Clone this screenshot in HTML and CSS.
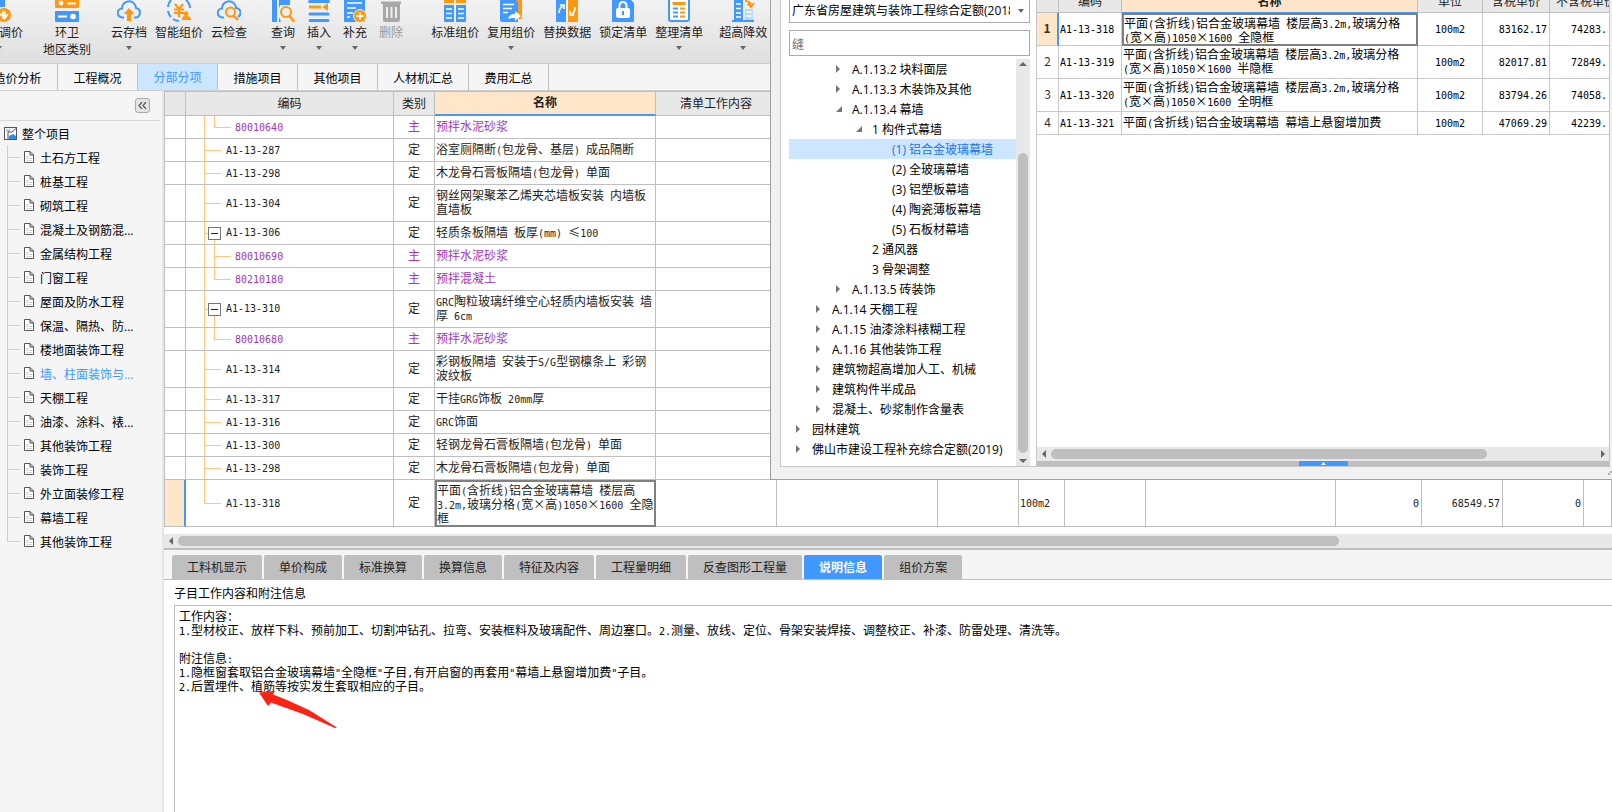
FILE: index.html
```html
<!DOCTYPE html>
<html lang="zh-CN">
<head>
<meta charset="utf-8">
<title>分部分项</title>
<link rel="stylesheet" href="styles.css">
</head>
<body>
<svg width="0" height="0" class="defs" aria-hidden="true">
  <symbol id="doc" viewBox="0 0 10 12"><path d="M.5 .5h5.500L9.500 4v7.500h-9z" fill="#fff" stroke="#555"/><path d="M6 .5V4h3.500" fill="none" stroke="#444"/><path d="M2 5.500h3M2 7.500h6M2 9.500h6" stroke="#ccc" stroke-width=".8"/></symbol>
  <symbol id="closed" viewBox="0 0 6 8"><path d="M0 0l4 4-4 4z" fill="#767676"/></symbol>
  <symbol id="open" viewBox="0 0 6 8"><path d="M6 1v6H0z" fill="#767676"/></symbol>
  <symbol id="down" viewBox="0 0 6 4"><path d="M0 0h6L3 4z" fill="#666"/></symbol>
</svg>
<div class="app">
  <header class="toolbar">
    <div class="group edge">
      <button class="tool"><svg class="ico" viewBox="0 0 24 22"><path d="M6 0h12v7H6z" fill="#4199ff"/><circle cx="17" cy="15" r="7" fill="#ff9712"/><path d="M13 16l3-4v7M21 14l-3 4v-7" fill="none" stroke="#fff" stroke-width="1.7"/></svg><span class="cut">调价</span><svg class="dd"><use href="#down"/></svg></button>
    </div>
    <div class="group">
      <button class="tool"><svg class="ico" viewBox="0 0 24 22"><path d="M0 0h24v6.5q0 1.500-1.500 1.500h-21Q0 8 0 6.500z" fill="#ff9712"/><path d="M12 3.500h9" stroke="#fff" stroke-width="2"/><circle cx="6" cy="3" r="2.400" fill="#fff"/><rect y="11" width="24" height="11" rx="1" fill="#4199ff"/><path d="M3 16.500h9" stroke="#fff" stroke-width="2"/><circle cx="18" cy="16.500" r="2.800" fill="#fff"/></svg><span>环卫</span><span>地区类别</span></button>
    </div>
    <div class="group">
      <button class="tool"><svg class="ico" viewBox="0 0 24 22"><path d="M7 17.500H5.500a4.500 4.500 0 0 1-.5-9A7 7 0 0 1 19 8a4.800 4.800 0 0 1-.5 9.500H17" fill="none" stroke="#4199ff" stroke-width="2"/><path d="M12 8l5.500 6H14v7h-4v-7H6.500z" fill="#ff9712"/></svg><span>云存档</span><svg class="dd"><use href="#down"/></svg></button>
      <button class="tool"><svg class="ico" viewBox="0 0 24 22"><path d="M4 0a11 11 0 0 0-3 7M1 11a11 11 0 0 0 3 6M6 19a11 11 0 0 0 6 2M19 0a11 11 0 0 1 4 8" fill="none" stroke="#4199ff" stroke-width="2"/><path d="M8 4l4 5 4-5M12 9v8M7 9.500h10M7 13h10" fill="none" stroke="#ff9712" stroke-width="2.200"/><path d="M15 20q0-4 3-4a2.500 2.500 0 1 1 2 0q4 0 4 4z" fill="#ff9712"/></svg><span>智能组价</span></button>
      <button class="tool"><svg class="ico" viewBox="0 0 24 22"><path d="M7 17.500H5.500a4.500 4.500 0 0 1-.5-9A7 7 0 0 1 19 8a4.800 4.800 0 0 1 2 9" fill="none" stroke="#4199ff" stroke-width="2"/><circle cx="13.500" cy="12" r="4.500" fill="#eee" stroke="#ff9712" stroke-width="2"/><path d="M16.500 15.500L21 20" stroke="#ff9712" stroke-width="2.400"/></svg><span>云检查</span></button>
    </div>
    <div class="group wide">
      <button class="tool"><svg class="ico" viewBox="0 0 24 22"><path d="M1 0h5v22H1zM8 0h11v5H9.500L8 8zM8 17l2 5H8z" fill="#4199ff"/><circle cx="15" cy="12" r="5" fill="none" stroke="#ff9712" stroke-width="2"/><path d="M18.500 16l4.500 5.500" stroke="#ff9712" stroke-width="2.400"/></svg><span>查询</span><svg class="dd"><use href="#down"/></svg></button>
      <button class="tool"><svg class="ico" viewBox="0 0 24 22"><path d="M2.500 1.500h19M3 14h18M3 20.500h18" stroke="#4199ff" stroke-width="3" stroke-linecap="round"/><path d="M2 5.500h12v3H2zM15 7l6-4v8z" fill="#ff9712"/></svg><span>插入</span><svg class="dd"><use href="#down"/></svg></button>
      <button class="tool"><svg class="ico" viewBox="0 0 24 22"><path d="M1 0h21v22H2q-1 0-1-1z" fill="#4199ff"/><path d="M4 3h15M4 8h9M4 13h6M4 17h3" stroke="#fff" stroke-width="1.500"/><circle cx="17" cy="16" r="6.500" fill="#ff9712" stroke="#eee"/><path d="M17 12.500v7M13.500 16h7" stroke="#fff" stroke-width="1.800"/></svg><span>补充</span><svg class="dd"><use href="#down"/></svg></button>
      <button class="tool" disabled><svg class="ico" viewBox="0 0 24 22"><path d="M2 1.500h20V4H2zM4 4h17v16q0 2-2 2H6q-2 0-2-2z" fill="#a8a8a8"/><path d="M8 7v11M12.500 7v11M17 7v11" stroke="#eee" stroke-width="2"/></svg><span>删除</span></button>
    </div>
    <div class="group last">
      <button class="tool"><svg class="ico" viewBox="0 0 24 22"><path d="M1 0h10v3H1zM13 0h10v3H13z" fill="#ff9712"/><path d="M1 5h10v17H2q-1 0-1-1zM13 5h10v16q0 1-1 1h-9z" fill="#4199ff"/><path d="M3 9h6M3 13.500h6M3 18h6M15 9h6M15 13.500h6M15 18h6" stroke="#fff" stroke-width="1.400"/></svg><span>标准组价</span></button>
      <button class="tool"><svg class="ico" viewBox="0 0 24 22"><path d="M16 0h7v17q0 2-2 2h-5z" fill="#ff9712"/><path d="M1 0h16l2 3v19H3q-2 0-2-2z" fill="#4199ff"/><path d="M4 4.500h11M4 8.500h9M4 12.500h5" stroke="#fff" stroke-width="1.600"/><path d="M9 19q1-5 7-5v-3l6 5-6 5v-3q-4-.5-7 1z" fill="#fff"/></svg><span>复用组价</span><svg class="dd"><use href="#down"/></svg></button>
      <button class="tool"><svg class="ico" viewBox="0 0 24 22"><path d="M1 0h10v22H2q-1 0-1-1z" fill="#4199ff"/><path d="M13 0h10v21q0 1-1 1h-9z" fill="#ff9712"/><path d="M4 13q0-5 4-7M5 5h4v4M20 7q0 5-3 7M15 11v4h4" fill="none" stroke="#fff" stroke-width="1.700"/></svg><span>替换数据</span></button>
      <button class="tool"><svg class="ico" viewBox="0 0 24 22"><path d="M1 0h19l3 3v18q0 1-1 1H2q-1 0-1-1z" fill="#4199ff"/><path d="M8.500 8V5.500a3.500 3.500 0 0 1 7 0V8" fill="none" stroke="#fff" stroke-width="2"/><rect x="5" y="8" width="14" height="10" rx="2" fill="#fff"/><path d="M12 11v4" stroke="#4199ff" stroke-width="2"/></svg><span>锁定清单</span></button>
      <button class="tool"><svg class="ico" viewBox="0 0 24 22"><path d="M2 0v19q0 2 2 2h16q2 0 2-2V0" fill="#fff" stroke="#4199ff" stroke-width="2"/><path d="M5.500 3.500h13" stroke="#ff9712" stroke-width="3"/><path d="M6 8.500h5M6 12.500h5M6 16.500h5" stroke="#4199ff" stroke-width="2"/><path d="M13 8.500h5M13 12.500h5M13 16.500h5" stroke="#ff9712" stroke-width="2"/></svg><span>整理清单</span><svg class="dd"><use href="#down"/></svg></button>
    </div>
    <div class="group">
      <button class="tool"><svg class="ico" viewBox="0 0 24 22"><path d="M3 0h9v21H3z" fill="#4199ff"/><path d="M14 9h8v12h-8z" fill="#b9d9fb"/><path d="M1 21h22" stroke="#4199ff" stroke-width="2"/><path d="M5 4h5M5 8.500h5M5 13h5M5 17h5M15.500 12h5M15.500 16h5" stroke="#fff" stroke-width="1.500"/><path d="M14 1q6 0 6 5M16.500 3.500L20 7l3-4" fill="none" stroke="#ff9712" stroke-width="2"/></svg><span>超高降效</span><svg class="dd"><use href="#down"/></svg></button>
    </div>
  </header>

  <nav class="tabs">
    <button class="tab first">造价分析</button><button class="tab">工程概况</button><button class="tab on">分部分项</button><button class="tab">措施项目</button><button class="tab">其他项目</button><button class="tab">人材机汇总</button><button class="tab">费用汇总</button>
  </nav>

  <div class="work">
    <aside class="side">
      <div class="sidehead"><button class="fold" aria-label="折叠"><svg viewBox="0 0 9 7"><path d="M4 0L1 3.500 4 7M8 0L5 3.500 8 7" fill="none" stroke="#555" stroke-width="1.200"/></svg></button></div>
      <div class="root"><svg class="rooticon" viewBox="0 0 13 13"><rect x=".5" y=".5" width="12" height="12" fill="#fff" stroke="#555"/><path d="M2 2.500h4v2H2z" fill="#8cc0fb"/><path d="M12.500 1L8 5H4v7" fill="none" stroke="#555"/><path d="M5 12V9l4-2 3 2v3z" fill="#2f8bf5"/></svg>整个项目</div>
      <ul class="parts">
        <li><svg><use href="#doc"/></svg>土石方工程</li>
        <li><svg><use href="#doc"/></svg>桩基工程</li>
        <li><svg><use href="#doc"/></svg>砌筑工程</li>
        <li><svg><use href="#doc"/></svg>混凝土及钢筋混...</li>
        <li><svg><use href="#doc"/></svg>金属结构工程</li>
        <li><svg><use href="#doc"/></svg>门窗工程</li>
        <li><svg><use href="#doc"/></svg>屋面及防水工程</li>
        <li><svg><use href="#doc"/></svg>保温、隔热、防...</li>
        <li><svg><use href="#doc"/></svg>楼地面装饰工程</li>
        <li class="cur"><svg><use href="#doc"/></svg>墙、柱面装饰与...</li>
        <li><svg><use href="#doc"/></svg>天棚工程</li>
        <li><svg><use href="#doc"/></svg>油漆、涂料、裱...</li>
        <li><svg><use href="#doc"/></svg>其他装饰工程</li>
        <li><svg><use href="#doc"/></svg>装饰工程</li>
        <li><svg><use href="#doc"/></svg>外立面装修工程</li>
        <li><svg><use href="#doc"/></svg>幕墙工程</li>
        <li><svg><use href="#doc"/></svg>其他装饰工程</li>
      </ul>
    </aside>

    <main class="main">
      <table class="grid items">
        <colgroup><col class="w22"><col class="w208"><col class="w41"><col class="w221"><col class="w121"><col class="w161"><col class="w81"><col class="w46"><col class="w81"><col class="w190"><col class="w86"><col class="w81"><col class="w81"><col></colgroup>
        <thead><tr><th></th><th>编码</th><th>类别</th><th class="hot">名称</th><th>清单工作内容</th><th></th><th></th><th></th><th></th><th></th><th></th><th></th><th></th><th></th></tr></thead>
        <tbody>
          <tr class="mat"><td></td><td class="sub end"><i>80010640</i></td><td class="kind">主</td><td>预拌水泥砂浆</td><td></td><td></td><td></td><td></td><td></td><td></td><td></td><td></td><td></td><td></td></tr>
          <tr><td></td><td class="code"><i>A1-13-287</i></td><td class="kind">定</td><td>浴室厕隔断<i>(</i>包龙骨、基层<i>) </i>成品隔断</td><td></td><td></td><td></td><td></td><td></td><td></td><td></td><td></td><td></td><td></td></tr>
          <tr><td></td><td class="code"><i>A1-13-298</i></td><td class="kind">定</td><td>木龙骨石膏板隔墙<i>(</i>包龙骨<i>) </i>单面</td><td></td><td></td><td></td><td></td><td></td><td></td><td></td><td></td><td></td><td></td></tr>
          <tr class="two"><td></td><td class="code"><i>A1-13-304</i></td><td class="kind">定</td><td>钢丝网架聚苯乙烯夹芯墙板安装<i> </i>内墙板<br>直墙板</td><td></td><td></td><td></td><td></td><td></td><td></td><td></td><td></td><td></td><td></td></tr>
          <tr><td></td><td class="parent"><button class="minus" aria-label="收起"></button><i>A1-13-306</i></td><td class="kind">定</td><td>轻质条板隔墙<i> </i>板厚<i>(mm) </i>≤<i>100</i></td><td></td><td></td><td></td><td></td><td></td><td></td><td></td><td></td><td></td><td></td></tr>
          <tr class="mat"><td></td><td class="sub"><i>80010690</i></td><td class="kind">主</td><td>预拌水泥砂浆</td><td></td><td></td><td></td><td></td><td></td><td></td><td></td><td></td><td></td><td></td></tr>
          <tr class="mat"><td></td><td class="sub end"><i>80210180</i></td><td class="kind">主</td><td>预拌混凝土</td><td></td><td></td><td></td><td></td><td></td><td></td><td></td><td></td><td></td><td></td></tr>
          <tr class="two"><td></td><td class="parent"><button class="minus" aria-label="收起"></button><i>A1-13-310</i></td><td class="kind">定</td><td><i>GRC</i>陶粒玻璃纤维空心轻质内墙板安装<i> </i>墙<br>厚<i> 6cm</i></td><td></td><td></td><td></td><td></td><td></td><td></td><td></td><td></td><td></td><td></td></tr>
          <tr class="mat"><td></td><td class="sub end"><i>80010680</i></td><td class="kind">主</td><td>预拌水泥砂浆</td><td></td><td></td><td></td><td></td><td></td><td></td><td></td><td></td><td></td><td></td></tr>
          <tr class="two"><td></td><td class="code"><i>A1-13-314</i></td><td class="kind">定</td><td>彩钢板隔墙<i> </i>安装于<i>S/G</i>型钢檩条上<i> </i>彩钢<br>波纹板</td><td></td><td></td><td></td><td></td><td></td><td></td><td></td><td></td><td></td><td></td></tr>
          <tr><td></td><td class="code"><i>A1-13-317</i></td><td class="kind">定</td><td>干挂<i>GRG</i>饰板<i> 20mm</i>厚</td><td></td><td></td><td></td><td></td><td></td><td></td><td></td><td></td><td></td><td></td></tr>
          <tr><td></td><td class="code"><i>A1-13-316</i></td><td class="kind">定</td><td><i>GRC</i>饰面</td><td></td><td></td><td></td><td></td><td></td><td></td><td></td><td></td><td></td><td></td></tr>
          <tr><td></td><td class="code"><i>A1-13-300</i></td><td class="kind">定</td><td>轻钢龙骨石膏板隔墙<i>(</i>包龙骨<i>) </i>单面</td><td></td><td></td><td></td><td></td><td></td><td></td><td></td><td></td><td></td><td></td></tr>
          <tr><td></td><td class="code"><i>A1-13-298</i></td><td class="kind">定</td><td>木龙骨石膏板隔墙<i>(</i>包龙骨<i>) </i>单面</td><td></td><td></td><td></td><td></td><td></td><td></td><td></td><td></td><td></td><td></td></tr>
          <tr class="three"><td class="mark"></td><td class="code end"><i>A1-13-318</i></td><td class="kind">定</td><td class="focus">平面<i>(</i>含折线<i>)</i>铝合金玻璃幕墙<i> </i>楼层高<br><i>3.2m,</i>玻璃分格<i>(</i>宽×高<i>)1050</i>×<i>1600 </i>全隐<br>框</td><td></td><td></td><td></td><td><i>100m2</i></td><td></td><td></td><td class="num"><i>0</i></td><td class="num"><i>68549.57</i></td><td class="num"><i>0</i></td><td></td></tr>
        </tbody>
      </table>
      <div class="hscroll main-scroll"><svg class="arr" viewBox="0 0 4 8"><path d="M4 0v8L0 4z"/></svg><span class="thumb"></span></div>

      <nav class="dock">
        <button>工料机显示</button><button>单价构成</button><button>标准换算</button><button>换算信息</button><button>特征及内容</button><button>工程量明细</button><button>反查图形工程量</button><button class="on">说明信息</button><button>组价方案</button>
      </nav>
      <section class="info">
        <h2>子目工作内容和附注信息</h2>
        <div class="note">
          <p>工作内容：</p>
          <p><i>1.</i>型材校正、放样下料、预前加工、切割冲钻孔、拉弯、安装框料及玻璃配件、周边塞口。<i>2.</i>测量、放线、定位、骨架安装焊接、调整校正、补漆、防雷处理、清洗等。</p>
          <p><br></p>
          <p>附注信息<i>:</i></p>
          <p><i>1.</i>隐框窗套取铝合金玻璃幕墙<i>"</i>全隐框<i>"</i>子目<i>,</i>有开启窗的再套用<i>"</i>幕墙上悬窗增加费<i>"</i>子目。</p>
          <p><i>2.</i>后置埋件、植筋等按实发生套取相应的子目。</p>
          <svg class="pointer" viewBox="0 0 80 38"><path d="M1 1.500L17 0l-2 3.500L29 9l22 10 28 17.500L77 37 45 23 13 11.500 10 15z" fill="#fb2314"/></svg>
        </div>
      </section>
    </main>
  </div>

  <section class="dialog">
    <div class="inner">
      <div class="finder">
        <div class="combo"><select aria-label="定额库"><option>广东省房屋建筑与装饰工程综合定额(2018)</option></select><svg class="dd"><use href="#down"/></svg></div>
        <input class="search" type="text" value="缝" aria-label="搜索">
        <div class="treebox">
          <ul class="tree">
            <li class="l2"><svg><use href="#closed"/></svg>A.1.13.2 块料面层</li>
            <li class="l2"><svg><use href="#closed"/></svg>A.1.13.3 木装饰及其他</li>
            <li class="l2"><svg><use href="#open"/></svg>A.1.13.4 幕墙</li>
            <li class="l3"><svg><use href="#open"/></svg>1 构件式幕墙</li>
            <li class="l4 sel"><svg></svg>(1) 铝合金玻璃幕墙</li>
            <li class="l4"><svg></svg>(2) 全玻璃幕墙</li>
            <li class="l4"><svg></svg>(3) 铝塑板幕墙</li>
            <li class="l4"><svg></svg>(4) 陶瓷薄板幕墙</li>
            <li class="l4"><svg></svg>(5) 石板材幕墙</li>
            <li class="l3"><svg></svg>2 通风器</li>
            <li class="l3"><svg></svg>3 骨架调整</li>
            <li class="l2"><svg><use href="#closed"/></svg>A.1.13.5 砖装饰</li>
            <li class="l1"><svg><use href="#closed"/></svg>A.1.14 天棚工程</li>
            <li class="l1"><svg><use href="#closed"/></svg>A.1.15 油漆涂料裱糊工程</li>
            <li class="l1"><svg><use href="#closed"/></svg>A.1.16 其他装饰工程</li>
            <li class="l1"><svg><use href="#closed"/></svg>建筑物超高增加人工、机械</li>
            <li class="l1"><svg><use href="#closed"/></svg>建筑构件半成品</li>
            <li class="l1"><svg><use href="#closed"/></svg>混凝土、砂浆制作含量表</li>
            <li class="l0"><svg><use href="#closed"/></svg>园林建筑</li>
            <li class="l0"><svg><use href="#closed"/></svg>佛山市建设工程补充综合定额(2019)</li>
          </ul>
          <div class="vscroll"><svg class="arr" viewBox="0 0 8 4"><path d="M4 0l4 4H0z"/></svg><span class="thumb"></span><svg class="arr" viewBox="0 0 8 4"><path d="M0 0h8L4 4z"/></svg></div>
        </div>
      </div>
      <div class="result">
        <table class="grid quota">
          <colgroup><col class="w22"><col class="w63"><col class="w296"><col class="w65"><col class="w67"><col></colgroup>
          <thead><tr><th></th><th>编码</th><th class="hot">名称</th><th>单位</th><th>含税单价</th><th class="clip">不含税单价</th></tr></thead>
          <tbody>
            <tr><td class="no mark"><b>1</b></td><td><i>A1-13-318</i></td><td class="focus">平面<i>(</i>含折线<i>)</i>铝合金玻璃幕墙<i> </i>楼层高<i>3.2m,</i>玻璃分格<br><i>(</i>宽×高<i>)1050</i>×<i>1600 </i>全隐框</td><td class="mid"><i>100m2</i></td><td class="num"><i>83162.17</i></td><td class="num"><i>74283.</i></td></tr>
            <tr><td class="no">2</td><td><i>A1-13-319</i></td><td>平面<i>(</i>含折线<i>)</i>铝合金玻璃幕墙<i> </i>楼层高<i>3.2m,</i>玻璃分格<br><i>(</i>宽×高<i>)1050</i>×<i>1600 </i>半隐框</td><td class="mid"><i>100m2</i></td><td class="num"><i>82017.81</i></td><td class="num"><i>72849.</i></td></tr>
            <tr><td class="no">3</td><td><i>A1-13-320</i></td><td>平面<i>(</i>含折线<i>)</i>铝合金玻璃幕墙<i> </i>楼层高<i>3.2m,</i>玻璃分格<br><i>(</i>宽×高<i>)1050</i>×<i>1600 </i>全明框</td><td class="mid"><i>100m2</i></td><td class="num"><i>83794.26</i></td><td class="num"><i>74058.</i></td></tr>
            <tr class="one"><td class="no">4</td><td><i>A1-13-321</i></td><td>平面<i>(</i>含折线<i>)</i>铝合金玻璃幕墙<i> </i>幕墙上悬窗增加费</td><td class="mid"><i>100m2</i></td><td class="num"><i>47069.29</i></td><td class="num"><i>42239.</i></td></tr>
          </tbody>
        </table>
        <div class="foot">
          <div class="hscroll"><svg class="arr" viewBox="0 0 4 8"><path d="M4 0v8L0 4z"/></svg><span class="track"><span class="thumb"></span></span><svg class="arr" viewBox="0 0 4 8"><path d="M0 0v8l4-4z"/></svg></div>
          <div class="splitter"><button aria-label="展开"><svg viewBox="0 0 5 3"><path d="M2.500 0L5 3H0z" fill="#fff"/></svg></button></div>
        </div>
      </div>
    </div>
    <svg class="grip" viewBox="0 0 4 4"><path d="M2 0h2v2H2zM0 2h2v2H0z" fill="#aaa"/></svg>
  </section>
</div>
</body>
</html>
```
FILE: styles.css
```css
* { box-sizing: border-box; }
body {
  margin: 0;
  overflow: hidden;
  background: #fff;
  color: #000;
  font: 12px/14px "Open Sans", "Noto Sans CJK SC", sans-serif;
}
button, input, select { font: inherit; color: inherit; margin: 0; padding: 0; border: 0; border-radius: 0; background: none; }
ul, p, h2 { margin: 0; padding: 0; list-style: none; font-weight: normal; font-size: 12px; }
svg { display: block; flex: none; }
i { font: 10px/0 "DejaVu Sans Mono", monospace; white-space: pre; }
.defs { position: absolute; }
.app { position: relative; display: flex; flex-direction: column; min-height: 100vh; }

.toolbar {
  display: flex;
  gap: 20px;
  height: 64px;
  background: linear-gradient(#f2f2f2, #dfdfdf);
  border-bottom: 1px solid #cdcdcd;
  color: #222;
}
.group { display: flex; gap: 8px; align-items: flex-start; }
.group.wide { gap: 12px; margin: 0 8px 0 4px; }
.group.last { margin-right: -4px; }
.edge { margin-left: -25px; }
.edge .tool { width: 48px; }
.tool { display: flex; flex-direction: column; align-items: center; line-height: 17px; white-space: nowrap; }
.tool[disabled] { color: #999; }
.ico { width: 24px; height: 22px; margin-bottom: 2px; }
.cut { align-self: flex-end; }
.dd { width: 6px; height: 4px; }
.tool .dd { margin-top: 5px; }

.tabs { display: flex; height: 27px; background: #f5f5f5; border-bottom: 1px solid #cfcfcf; }
.tab { min-width: 80px; padding: 3px 15px 0; border-right: 1px solid #bfbfbf; white-space: nowrap; }
.tab.first { margin-left: -22px; }
.tab.on { padding-top: 1px; background: #cce6ff; color: #4199ff; }

.work { display: flex; flex: 1; }
.side { flex: none; width: 164px; background: #f5f5f5; border-right: 2px solid #e6e6e6; }
.sidehead { display: flex; justify-content: flex-end; height: 30px; margin-right: 2px; padding: 7px 10px 0 0; border-bottom: 1px solid #d8d8d8; }
.fold { display: flex; align-items: center; justify-content: center; width: 15px; height: 15px; border: 1px solid #aaa; border-radius: 3px; background: #e4e4e4; }
.fold svg { width: 9px; height: 7px; }
.root { display: flex; align-items: center; gap: 5px; height: 24px; padding: 3px 0 0 4px; }
.rooticon { width: 13px; height: 13px; margin-bottom: 2px; }
.parts li {
  display: flex;
  align-items: center;
  gap: 6px;
  height: 24px;
  padding: 3px 0 0 24px;
  white-space: nowrap;
  background:
    linear-gradient(#ffc77d, #ffc77d) 7px 0 / 1px 100% no-repeat,
    linear-gradient(#ffc77d, #ffc77d) 7px 12px / 13px 1px no-repeat;
}
.parts li:last-child { background-size: 1px 12px, 13px 1px; }
.parts svg { width: 10px; height: 12px; margin-bottom: 3px; }
.parts .cur { color: #4199ff; }

.main { flex: 1; min-width: 0; display: flex; flex-direction: column; font-family: "Noto Sans CJK SC", sans-serif; }
.grid { width: 100%; table-layout: fixed; border-collapse: separate; border-spacing: 0; }
.grid th, .grid td { padding: 0 1px 2px; border: 0 solid #bfbfbf; border-width: 0 1px 1px 0; overflow: hidden; white-space: nowrap; }
.grid th { background: #e8e8e8; font-weight: normal; color: #222; text-align: center; }
.grid th.hot { background: #ffe6c8; border-bottom: 2px solid #4199ff; font-weight: bold; }
.grid td.mark { background: #ffe6c8; border-right: 2px solid #4199ff; }
.grid td.focus { border: 2px solid #808080; padding: 0; }
.grid td.num { text-align: right; padding-right: 2px; }
.grid td.mid { text-align: center; }
.w22 { width: 22px; } .w41 { width: 41px; } .w46 { width: 46px; } .w63 { width: 63px; }
.w65 { width: 65px; } .w67 { width: 67px; } .w81 { width: 81px; } .w86 { width: 86px; }
.w121 { width: 121px; } .w161 { width: 161px; } .w190 { width: 190px; }
.w208 { width: 208px; } .w221 { width: 221px; } .w296 { width: 296px; }

.items { color: #222; }
.items th { height: 25px; border-top-width: 1px; }
.items td { height: 23px; }
.items .two td { height: 37px; }
.items .three td { height: 47px; }
.items th:first-child, .items td:first-child { border-left-width: 1px; }
.items .kind { text-align: center; }
.items .mat { color: #a336b5; }
.items .code, .items .sub, .items .parent {
  padding-left: 40px;
  background-image: linear-gradient(#ffc77d, #ffc77d), linear-gradient(#ffc77d, #ffc77d), linear-gradient(#ffc77d, #ffc77d);
  background-repeat: no-repeat;
  background-position: 18px 0, 18px 50%, 28px 0;
  background-size: 1px 100%, 17px 1px, 0 0;
}
.items .code.end { background-size: 1px 50%, 17px 1px, 0 0; }
.items .sub { padding-left: 49px; background-position: 18px 0, 28px 50%, 28px 0; background-size: 1px 100%, 17px 1px, 1px 100%; }
.items .sub.end { background-size: 1px 100%, 17px 1px, 1px 50%; }
.items .parent { padding-left: 22px; background-position: 18px 0, 18px 50%, 28px 100%; background-size: 1px 100%, 4px 1px, 1px 50%; }
.minus { width: 13px; height: 13px; margin-right: 5px; vertical-align: middle; border: 1px solid #777; background: linear-gradient(#222, #222) center / 7px 1px no-repeat #fff; }

.hscroll { display: flex; align-items: center; height: 14px; background: #e8e8e8; }
.arr { fill: #666670; }
.hscroll .arr { width: 4px; height: 8px; }
.thumb { background: #bfbfbf; border-radius: 5px; }
.hscroll .thumb { height: 10px; }
.main-scroll { margin-top: 7px; padding: 0 5px; gap: 5px; }
.main-scroll .thumb { flex: 1; margin-right: 268px; }

.dock { display: flex; gap: 2px; height: 32px; padding: 5px 0 0 8px; background: #f5f5f5; border-top: 2px solid #bfbfbf; border-bottom: 1px solid #bfbfbf; }
.dock button { padding: 0 15px; background: #bfbfbf; border-radius: 2px 2px 0 0; color: #222; white-space: nowrap; }
.dock .on { background: #4199ff; color: #fff; font-weight: bold; }
.info { flex: 1; display: flex; flex-direction: column; padding: 6px 0 0 10px; }
.info h2 { line-height: 14px; margin-bottom: 5px; }
.note { position: relative; flex: 1; min-height: 207px; padding: 3px 4px; border: 1px solid #bfbfbf; border-width: 1px 0 0 1px; white-space: nowrap; }
.note p { height: 14px; }
.pointer { position: absolute; left: 83px; top: 85px; width: 80px; height: 38px; }

.dialog { position: absolute; left: 770px; right: 0; top: 0; padding: 0 2px 12px 9px; background: #f1f1f1; border-left: 1px solid #a0a0a0; border-bottom: 1px solid #a0a0a0; }
.inner { display: flex; background: #fff; border: 1px solid #c6c6c6; border-top: 0; }
.finder { flex: none; width: 255px; padding: 0 6px 0 8px; }
.combo { display: flex; align-items: center; height: 24px; margin-top: -1px; padding-right: 5px; border: 1px solid #aaa; }
.combo select { flex: 1; min-width: 0; padding-left: 2px; appearance: none; overflow: hidden; margin-right: 8px; }
.search { display: block; width: 100%; height: 26px; margin: 7px 0 3px; padding: 1px 0 0 2px; border: 1px solid #aaa; color: #777; }
.treebox { display: flex; }
.tree { flex: 1; min-width: 0; padding-bottom: 7px; }
.tree li { display: flex; align-items: center; gap: 10px; height: 20px; padding-top: 2px; white-space: nowrap; }
.tree svg { width: 6px; height: 8px; margin-bottom: 2px; }
.tree .l0 { padding-left: 7px; }
.tree .l1 { padding-left: 27px; }
.tree .l2 { padding-left: 47px; }
.tree .l3 { padding-left: 67px; }
.tree .l4 { padding-left: 87px; }
.tree .sel { background: #cce6ff; color: #1c74e8; }
.vscroll { display: flex; flex-direction: column; align-items: center; justify-content: space-between; width: 14px; padding: 3px 0; background: #e8e8e8; }
.vscroll .arr { width: 8px; height: 4px; }
.vscroll .thumb { width: 10px; height: 300px; margin-top: 80px; }

.result { flex: 1; min-width: 0; display: flex; flex-direction: column; justify-content: space-between; border-left: 1px solid #c6c6c6; font-family: "Noto Sans CJK SC", sans-serif; }
.quota { margin-top: -11px; }
.quota th { height: 24px; padding-bottom: 0; }
.quota th.hot { border-bottom-width: 1px; }
.quota th.clip { text-align: left; padding-left: 6px; }
.quota td { height: 33px; border-color: #c8c8c8; }
.quota .one td { height: 23px; }
.quota td.no { text-align: center; color: #333; }
.quota th:last-child, .quota td:last-child { border-right: 0; }
.result .hscroll { gap: 5px; padding: 0 4px 0 5px; }
.track { flex: 1; display: flex; }
.track .thumb { width: 80%; }
.splitter { display: flex; justify-content: center; height: 5px; background: #bfbfbf; }
.splitter button { display: flex; align-items: center; justify-content: center; width: 49px; height: 5px; background: #4199ff; }
.splitter svg { width: 5px; height: 3px; }
.grip { position: absolute; right: 0; bottom: 4px; width: 4px; height: 4px; }
```
